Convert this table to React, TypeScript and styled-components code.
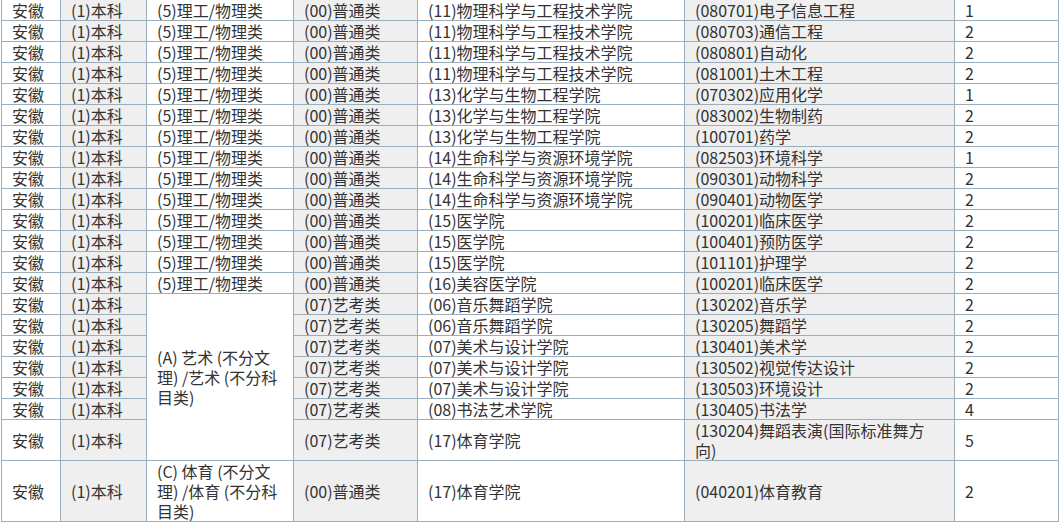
import React from "react"
import styled, { createGlobalStyle } from "styled-components"

const GlobalStyle = createGlobalStyle`
  html, body {
    margin: 0;
    padding: 0;
    background: #ffffff;
  }
  body {
    font-family: "Noto Sans CJK SC", "DejaVu Sans", sans-serif;
  }
`

const Page = styled.div`
  padding: 1px 1px 0;
  margin-top: -1px;
`

const Table = styled.table`
  border-collapse: collapse;
  table-layout: fixed;
  width: 1057px;
  font-size: 16px;
  line-height: 20px;
  color: #333333;

  tr:first-child td {
    border-top: none;
  }
`

const Cell = styled.td<{ $shade?: boolean }>`
  border: 1px solid #9aaebb;
  background: ${(p) => (p.$shade ? "#efefef" : "#ffffff")};
  padding: 0 0 0 10px;
  vertical-align: middle;
  white-space: nowrap;
`

const KindText = styled.span`
  display: block;
  white-space: normal;
`

type Row = {
  kind?: string
  type: string
  college: string
  major: React.ReactNode
  count: string
}

const widths = [59, 86, 147, 124, 267, 270, 104]

const SCI = "(5)理工/物理类"

const rows: Row[] = [
  { kind: SCI, type: "(00)普通类", college: "(11)物理科学与工程技术学院", major: "(080701)电子信息工程", count: "1" },
  { kind: SCI, type: "(00)普通类", college: "(11)物理科学与工程技术学院", major: "(080703)通信工程", count: "2" },
  { kind: SCI, type: "(00)普通类", college: "(11)物理科学与工程技术学院", major: "(080801)自动化", count: "2" },
  { kind: SCI, type: "(00)普通类", college: "(11)物理科学与工程技术学院", major: "(081001)土木工程", count: "2" },
  { kind: SCI, type: "(00)普通类", college: "(13)化学与生物工程学院", major: "(070302)应用化学", count: "1" },
  { kind: SCI, type: "(00)普通类", college: "(13)化学与生物工程学院", major: "(083002)生物制药", count: "2" },
  { kind: SCI, type: "(00)普通类", college: "(13)化学与生物工程学院", major: "(100701)药学", count: "2" },
  { kind: SCI, type: "(00)普通类", college: "(14)生命科学与资源环境学院", major: "(082503)环境科学", count: "1" },
  { kind: SCI, type: "(00)普通类", college: "(14)生命科学与资源环境学院", major: "(090301)动物科学", count: "2" },
  { kind: SCI, type: "(00)普通类", college: "(14)生命科学与资源环境学院", major: "(090401)动物医学", count: "2" },
  { kind: SCI, type: "(00)普通类", college: "(15)医学院", major: "(100201)临床医学", count: "2" },
  { kind: SCI, type: "(00)普通类", college: "(15)医学院", major: "(100401)预防医学", count: "2" },
  { kind: SCI, type: "(00)普通类", college: "(15)医学院", major: "(101101)护理学", count: "2" },
  { kind: SCI, type: "(00)普通类", college: "(16)美容医学院", major: "(100201)临床医学", count: "2" },
  { kind: "art", type: "(07)艺考类", college: "(06)音乐舞蹈学院", major: "(130202)音乐学", count: "2" },
  { type: "(07)艺考类", college: "(06)音乐舞蹈学院", major: "(130205)舞蹈学", count: "2" },
  { type: "(07)艺考类", college: "(07)美术与设计学院", major: "(130401)美术学", count: "2" },
  { type: "(07)艺考类", college: "(07)美术与设计学院", major: "(130502)视觉传达设计", count: "2" },
  { type: "(07)艺考类", college: "(07)美术与设计学院", major: "(130503)环境设计", count: "2" },
  { type: "(07)艺考类", college: "(08)书法艺术学院", major: "(130405)书法学", count: "4" },
  {
    type: "(07)艺考类",
    college: "(17)体育学院",
    major: (
      <>
        (130204)舞蹈表演(国际标准舞方
        <br />
        向)
      </>
    ),
    count: "5",
  },
  { kind: "sport", type: "(00)普通类", college: "(17)体育学院", major: "(040201)体育教育", count: "2" },
]

const renderKind = (kind?: string) => {
  if (!kind) return null
  if (kind === "art")
    return (
      <Cell rowSpan={7}>
        <KindText>
          (A) 艺术 (不分文
          <br />
          理) /艺术 (不分科
          <br />
          目类)
        </KindText>
      </Cell>
    )
  if (kind === "sport")
    return (
      <Cell>
        <KindText>
          (C) 体育 (不分文
          <br />
          理) /体育 (不分科
          <br />
          目类)
        </KindText>
      </Cell>
    )
  return <Cell>{kind}</Cell>
}

export default function App() {
  return (
    <Page>
      <GlobalStyle />
      <Table>
        <colgroup>
          {widths.map((w, i) => (
            <col key={i} style={{ width: w }} />
          ))}
        </colgroup>
        <tbody>
          {rows.map((r, i) => (
            <tr key={i}>
              <Cell>安徽</Cell>
              <Cell $shade>(1)本科</Cell>
              {renderKind(r.kind)}
              <Cell $shade>{r.type}</Cell>
              <Cell>{r.college}</Cell>
              <Cell $shade>{r.major}</Cell>
              <Cell>{r.count}</Cell>
            </tr>
          ))}
        </tbody>
      </Table>
    </Page>
  )
}
